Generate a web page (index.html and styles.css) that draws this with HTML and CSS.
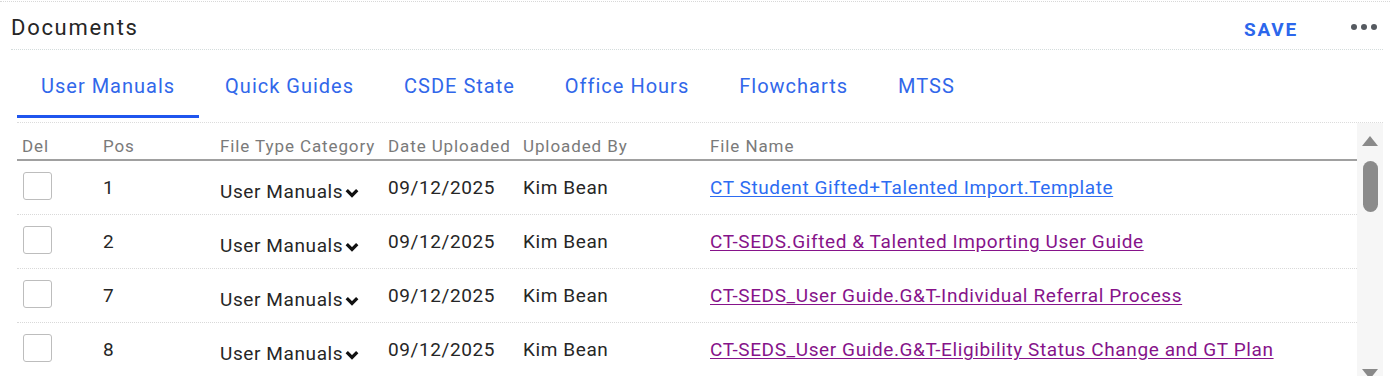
FILE: index.html
```html
<!DOCTYPE html>
<html lang="en">
<head>
  <meta charset="UTF-8" />
  <title>Documents</title>
  <link rel="stylesheet" href="styles.css">
</head>
<body>
  <div class="panel">
    <div class="panel-head">
      <h2>Documents</h2>
      <div class="actions">
        <button class="save">SAVE</button>
        <span class="more"><i></i><i></i><i></i></span>
      </div>
    </div>

    <div class="tabs">
      <a class="tab active">User Manuals</a>
      <a class="tab">Quick Guides</a>
      <a class="tab">CSDE State</a>
      <a class="tab">Office Hours</a>
      <a class="tab">Flowcharts</a>
      <a class="tab">MTSS</a>
    </div>

    <div class="grid-wrap">
      <div class="docs">
        <div class="row head">
          <span>Del</span>
          <span>Pos</span>
          <span>File Type Category</span>
          <span>Date Uploaded</span>
          <span>Uploaded By</span>
          <span>File Name</span>
        </div>
        <div class="row">
          <span><input type="checkbox" class="chk"></span>
          <span>1</span>
          <span class="cat">User Manuals<svg viewBox="0 0 12 8"><path d="M1.5 1.5 6 6l4.5-4.5"/></svg></span>
          <span>09/12/2025</span>
          <span>Kim Bean</span>
          <span><a class="file">CT Student Gifted+Talented Import.Template</a></span>
        </div>
        <div class="row">
          <span><input type="checkbox" class="chk"></span>
          <span>2</span>
          <span class="cat">User Manuals<svg viewBox="0 0 12 8"><path d="M1.5 1.5 6 6l4.5-4.5"/></svg></span>
          <span>09/12/2025</span>
          <span>Kim Bean</span>
          <span><a class="file visited">CT-SEDS.Gifted &amp; Talented Importing User Guide</a></span>
        </div>
        <div class="row">
          <span><input type="checkbox" class="chk"></span>
          <span>7</span>
          <span class="cat">User Manuals<svg viewBox="0 0 12 8"><path d="M1.5 1.5 6 6l4.5-4.5"/></svg></span>
          <span>09/12/2025</span>
          <span>Kim Bean</span>
          <span><a class="file visited">CT-SEDS_User Guide.G&amp;T-Individual Referral Process</a></span>
        </div>
        <div class="row">
          <span><input type="checkbox" class="chk"></span>
          <span>8</span>
          <span class="cat">User Manuals<svg viewBox="0 0 12 8"><path d="M1.5 1.5 6 6l4.5-4.5"/></svg></span>
          <span>09/12/2025</span>
          <span>Kim Bean</span>
          <span><a class="file visited">CT-SEDS_User Guide.G&amp;T-Eligibility Status Change and GT Plan</a></span>
        </div>
      </div>
      <div class="scrollbar">
        <span class="arrow up"></span>
        <span class="thumb"></span>
        <span class="arrow down"></span>
      </div>
    </div>
  </div>
</body>
</html>
```

FILE: styles.css
```css
body {
  margin: 0;
  background: #fff;
  font-family: Roboto, "Liberation Sans", sans-serif;
  color: #262626;
  overflow: hidden;
}
.panel {
  padding: 0 7px 0 11px;
  border-top: 1px dotted #d8d8d8;
  margin-top: 1px;
}
.panel-head {
  height: 47px;
  display: flex;
  align-items: center;
  justify-content: space-between;
  border-bottom: 1px dotted #d4dcdc;
}
.panel-head h2 {
  margin: 0;
  font-size: 22px;
  font-weight: 400;
  letter-spacing: 1.7px;
  color: #262626;
  margin-top: 4px;
}
.actions {
  display: flex;
  align-items: center;
  gap: 53px;
  margin-top: 8px;
}
.save {
  background: none;
  border: none;
  padding: 0;
  font-family: inherit;
  font-size: 19px;
  font-weight: 700;
  letter-spacing: 1.8px;
  color: #2c67ec;
}
.more {
  display: flex;
  gap: 4px;
  margin-right: 6px;
  margin-top: -6px;
}
.more i {
  width: 6px;
  height: 6px;
  border-radius: 50%;
  background: #555a60;
}

/* tabs */
.tabs {
  display: flex;
  margin-left: 6px;
  padding-bottom: 4px;
  border-bottom: 1px dotted #dcdcdc;
}
.tab {
  padding: 6px 24px 0 24px;
  margin-right: 2px;
  height: 59px;
  display: flex;
  align-items: center;
  border-bottom: 3px solid transparent;
  font-size: 20px;
  letter-spacing: 1px;
  color: #3167ea;
  cursor: pointer;
}
.tab.active {
  border-bottom-color: #1f55ee;
}

/* grid */
.grid-wrap {
  display: flex;
  margin-left: 6px;
  margin-top: 2px;
}
.docs {
  flex: 1;
}
.row {
  display: grid;
  grid-template-columns: 81px 117px 168px 135px 187px 1fr;
  align-items: center;
  padding-left: 5px;
  height: 53px;
  border-bottom: 1px dotted #d9d9d9;
  font-size: 19px;
  letter-spacing: 0.6px;
}
.row.head {
  height: 27px;
  padding-top: 7px;
  border-bottom: 2px solid #a0a0a0;
  font-size: 17px;
  letter-spacing: 0.9px;
  color: #7a7a7a;
}
.row:last-child {
  border-bottom: none;
}
.chk {
  appearance: none;
  width: 29px;
  height: 28px;
  margin: 0 0 0 1px;
  border: 1.5px solid #bdbdbd;
  border-radius: 3px;
  background: #fff;
  display: block;
  margin-top: -3px;
}
.cat {
  display: flex;
  align-items: center;
  margin-top: 8px;
}
.cat svg {
  width: 14px;
  height: 10px;
  margin-left: 2px;
  margin-top: 3px;
  fill: none;
  stroke: #111;
  stroke-width: 2.8;
}
.file {
  color: #2d6cf2;
  text-decoration: underline;
  text-underline-offset: 2px;
  cursor: pointer;
}
.file.visited {
  color: #86138a;
}

/* fake scrollbar */
.scrollbar {
  width: 26px;
  position: relative;
  background: #f6f6f6;
  height: 253px;
  margin-top: -2px;
}
.arrow {
  position: absolute;
  left: 5px;
  width: 0;
  height: 0;
  border-left: 8px solid transparent;
  border-right: 8px solid transparent;
}
.arrow.up {
  top: 13px;
  border-bottom: 10px solid #8a8a8a;
}
.arrow.down {
  bottom: -3px;
  border-top: 10px solid #8a8a8a;
}
.thumb {
  position: absolute;
  left: 6px;
  top: 38px;
  width: 15px;
  height: 51px;
  border-radius: 8px;
  background: #8b8b8b;
}
```
